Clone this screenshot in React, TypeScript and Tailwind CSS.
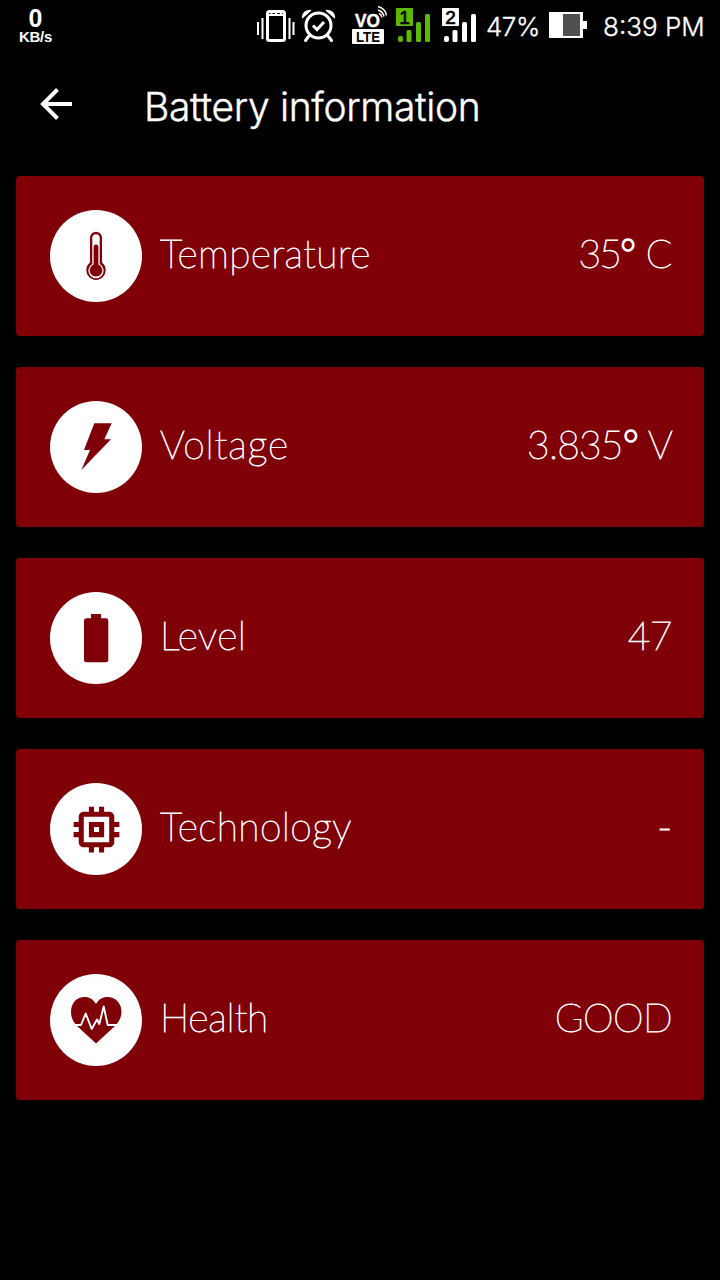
import type { ReactNode } from 'react';
import { MdMemory } from 'react-icons/md';

type Row = {
  label: string;
  value: ReactNode;
  labelClass: string;
  valueClass: string;
  icon: ReactNode;
};

const degree = <span className="[-webkit-text-stroke:2px_white]">°</span>;

const rows: Row[] = [
  {
    label: 'Temperature',
    value: <>35{degree} C</>,
    labelClass: 'tracking-[0.35px]',
    valueClass: 'tracking-[-1.8px] [word-spacing:2px] mr-[-0.5px] pr-[2px]',
    icon: (
      <svg viewBox="0 0 92 92" className="size-full">
        <path d="M40 27.700a6 6 0 0 1 12 0V52.600a9.700 9.700 0 1 1-12 0z" fill="#800008" />
        <path d="M42.300 28a3.700 3.700 0 0 1 7.400 0V53.900a7.600 7.600 0 1 1-7.400 0z" fill="#fff" />
        <path d="M43.600 37a2.400 2.400 0 0 1 4.800 0V54.500a6.300 6.300 0 1 1-4.800 0z" fill="#800008" />
      </svg>
    ),
  },
  {
    label: 'Voltage',
    value: <>3.835{degree} V</>,
    labelClass: 'tracking-[0.9px]',
    valueClass: 'tracking-[-0.8px] [word-spacing:1px]',
    icon: (
      <svg viewBox="0 0 92 92" className="size-full">
        <path d="M44.300 22.300H61.700L54.300 38.300H61L31.300 69 40 49H34z" fill="#800008" />
      </svg>
    ),
  },
  {
    label: 'Level',
    value: '47',
    labelClass: 'tracking-[0.5px]',
    valueClass: 'tracking-[-0.5px]',
    icon: (
      <svg viewBox="0 0 92 92" className="size-full" fill="#800008">
        <rect x="41" y="22" width="10" height="8" />
        <rect x="34" y="26.300" width="24.300" height="43.900" rx="2.500" />
      </svg>
    ),
  },
  {
    label: 'Technology',
    value: '-',
    labelClass: 'tracking-[0.4px]',
    valueClass: '[-webkit-text-stroke:1.5px_white]',
    icon: <MdMemory size={61} color="#800008" />,
  },
  {
    label: 'Health',
    value: 'GOOD',
    labelClass: 'tracking-[-0.2px]',
    valueClass: 'tracking-[-0.6px]',
    icon: (
      <svg viewBox="0 0 92 92" className="size-full">
        <path
          d="M46 69.500 27 52C22.500 47 21 43 21 37.500 21 29 27 23 34.500 23 39.500 23 43.500 25.500 46 30 48.500 25.500 52.500 23 57.500 23 65 23 71.500 29 71.500 37.500 71.500 43 69.500 47 65 52z"
          fill="#800008"
        />
        <path
          d="M22 51h9l4.700-11.500 6 15.500 5.300-9.500 2.300 4.500 4.400-17.500 4 18.500H70"
          fill="none"
          stroke="#fff"
          strokeWidth="1.900"
          strokeLinejoin="round"
        />
      </svg>
    ),
  },
];

function Signal({ slot, color }: { slot: string; color: string }) {
  return (
    <svg viewBox="0 0 35 50" className="h-[50px] w-[35px]" fill={color}>
      <rect y="8" width="17" height="18" rx="1" />
      <text x="8.500" y="23.500" textAnchor="middle" fill="#000" fontSize="19" fontFamily="Liberation Sans, sans-serif" stroke="#000" strokeWidth="0.700">
        {slot}
      </text>
      <rect x="2" y="36" width="5" height="6" rx="2" />
      <rect x="10.500" y="30" width="5" height="12" rx="1.500" />
      <rect x="20" y="22" width="5" height="20" rx="1.500" />
      <rect x="29" y="14" width="5" height="28" rx="1.500" />
    </svg>
  );
}

function StatusBar() {
  return (
    <div className="flex h-[50px] items-center">
      <div className="ml-[18px] flex w-[35px] flex-col items-center self-start pt-[7px] font-['Liberation_Sans',sans-serif] font-bold">
        <span className="text-[25px] leading-[22px]">0</span>
        <span className="text-[15px] leading-[15px] tracking-[-0.3px]">KB/s</span>
      </div>

      <svg viewBox="256 0 40 50" className="ml-[203px] h-[50px] w-10" fill="none" stroke="#fff">
        <rect x="267.500" y="11.500" width="17" height="29" rx="2" strokeWidth="3" />
        <path d="M267 15h18M271.500 12v4M276 12v4M281 12v4" strokeWidth="2" />
        <path d="M258 22v13M262.500 18v21M289.500 18v21M293.500 22v13" strokeWidth="2" />
      </svg>

      <svg viewBox="301 0 36 50" className="ml-[5px] h-[50px] w-9" fill="none" stroke="#fff" strokeLinecap="round">
        <circle cx="318.500" cy="25.500" r="12.500" strokeWidth="3" />
        <path d="M313 25.500l4 4 7-7.500" strokeWidth="3" strokeLinecap="butt" />
        <path d="M308.500 36.500l-3 4M328.500 36.500l3 4" strokeWidth="3" />
        <path d="M302.500 17.500c0-4.500 3.500-7 8-7zM334.500 17.500c0-4.500-3.500-7-8-7z" fill="#fff" strokeWidth="1.500" strokeLinejoin="round" />
      </svg>

      <svg viewBox="351 0 38 50" className="ml-[14px] h-[50px] w-[38px]" fontFamily="Liberation Sans, sans-serif" fontWeight="700">
        <text x="355" y="27" fill="#fff" stroke="#fff" strokeWidth="0.400" fontSize="19" textLength="25" lengthAdjust="spacingAndGlyphs">VO</text>
        <rect x="352" y="29" width="32" height="15" rx="1" fill="#fff" />
        <text x="356" y="41.700" fill="#000" fontSize="14" textLength="24" lengthAdjust="spacingAndGlyphs">LTE</text>
        <path d="M379 13.500q2.500 1 3 4M378 10q5 1.500 6 6.500M378 6.500q7.500 2 8.500 9" fill="none" stroke="#fff" strokeWidth="1.500" />
      </svg>

      <div className="ml-[7px] flex gap-[11px]">
        <Signal slot="1" color="#5cb800" />
        <Signal slot="2" color="#fff" />
      </div>

      <span className="mt-[2px] ml-[9px] w-[63px] whitespace-nowrap font-['Inter',sans-serif] text-[26px] font-light tracking-[-0.5px] [-webkit-text-stroke:0.3px_white]">
        47%
      </span>

      <svg viewBox="549 0 38 50" className="h-[50px] w-[38px]">
        <path d="M549 12h34v9h4v8h-4v9h-34z" fill="#fff" />
        <rect x="563" y="14" width="17" height="22" fill="#505050" />
      </svg>

      <span className="mt-[2px] ml-4 whitespace-nowrap font-['Inter',sans-serif] text-[26px] font-light [-webkit-text-stroke:0.3px_white]">
        8:39 PM
      </span>
    </div>
  );
}

export default function App() {
  return (
    <div className="min-h-screen w-[720px] overflow-hidden bg-black text-white">
      <StatusBar />

      <header className="flex h-[126px] items-start pl-10">
        <svg viewBox="0 0 32 32" className="mt-[38px] size-8" fill="none" stroke="#fff" strokeWidth="4">
          <path d="M32 16H3M17.500 1.500 3 16l14.500 14.500" />
        </svg>
        <h1 className="mt-[33px] ml-[72px] whitespace-nowrap font-['Inter',sans-serif] text-[39px] leading-[48px] font-light tracking-[-0.35px] [-webkit-text-stroke:0.4px_white]">
          Battery information
        </h1>
      </header>

      <main className="flex flex-col gap-[31px] px-4">
        {rows.map((row) => (
          <section key={row.label} className="flex h-40 items-center rounded-[4px] bg-[#800008] pr-8 pl-[34px]">
            <div className="flex size-[92px] shrink-0 items-center justify-center rounded-full bg-white">{row.icon}</div>
            <div className="mb-1.5 ml-[18px] flex flex-1 items-baseline justify-between font-['Lato',sans-serif] text-[39px] leading-[48px] font-thin [-webkit-text-stroke:0.9px_white]">
              <span className={row.labelClass}>{row.label}</span>
              <span className={row.valueClass}>{row.value}</span>
            </div>
          </section>
        ))}
      </main>
    </div>
  );
}
